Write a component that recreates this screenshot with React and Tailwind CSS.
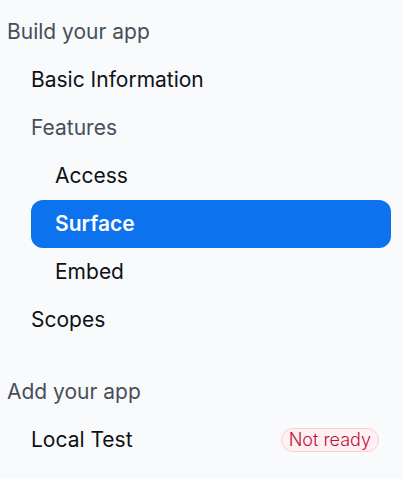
const item = "flex h-12 items-center rounded-xl text-[#0f1115]";

export default function App() {
  return (
    <nav
      aria-label="App settings"
      className="min-h-screen bg-[#f8fafc] pt-2 pr-3 pb-4 pl-[7px] font-[Inter,sans-serif] text-[21px]"
    >
      <section>
        <h2 className="flex h-12 items-center text-[#474e5a]">Build your app</h2>
        <ul className="pl-6">
          <li><a href="#basic" className={item}>Basic Information</a></li>
          <li>
            <h3 className="flex h-12 items-center text-[#474e5a]">Features</h3>
            <ul>
              <li><a href="#access" className={`${item} pl-6`}>Access</a></li>
              <li>
                <a
                  href="#surface"
                  aria-current="page"
                  className="flex h-12 items-center rounded-xl bg-[#0d72ed] pl-6 font-semibold text-white"
                >
                  Surface
                </a>
              </li>
              <li><a href="#embed" className={`${item} pl-6`}>Embed</a></li>
            </ul>
          </li>
          <li><a href="#scopes" className={item}>Scopes</a></li>
        </ul>
      </section>
      <section className="mt-6">
        <h2 className="flex h-12 items-center text-[#474e5a]">Add your app</h2>
        <ul className="pl-6">
          <li>
            <a href="#local-test" className={`${item} justify-between pr-3`}>
              Local Test
              <span className="flex h-6 items-center rounded-full border border-[#fccdd3] bg-[#fff1f2] px-[7px] text-lg font-light text-[#be123c]">
                Not ready
              </span>
            </a>
          </li>
        </ul>
      </section>
    </nav>
  );
}
